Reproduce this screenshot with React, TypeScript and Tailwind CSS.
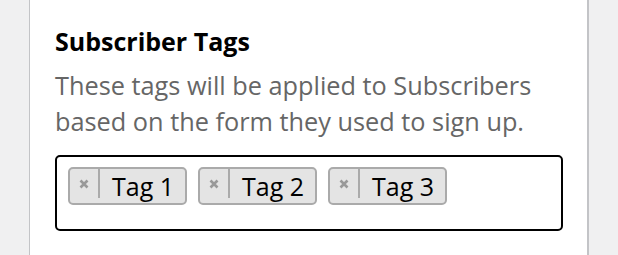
const tags = ["Tag 1", "Tag 2", "Tag 3"];

const TagChip = ({ label }: { label: string }) => (
  <li className="flex h-[38px] items-start rounded-[5px] border-2 border-[#aaaaaa] bg-[#e4e4e4]">
    <span className="flex h-[29px] w-[30px] items-center justify-center border-r-2 border-[#aaaaaa] pt-[1px]">
      <svg width="10" height="10" viewBox="0 0 10 10" className="text-[#999999]">
        <path d="M1.5 1.5 L8.5 8.5 M8.5 1.5 L1.5 8.5" stroke="currentColor" strokeWidth="2.6" />
      </svg>
    </span>
    <span className="pl-[12px] pr-[11px] text-[25px] leading-[34px] text-black">{label}</span>
  </li>
);

export default function App() {
  return (
    <div
      className="flex h-[255px] w-[618px] bg-[#f0f0f1]"
      style={{ fontFamily: '"Open Sans", "Noto Sans", sans-serif' }}
    >
      <div className="ml-[29px] w-[560px] border-l border-r-2 border-[#c3c4c7] bg-white pl-[25px] pr-[24px] pt-[26px]">
        <h3 className="text-[25px] font-bold leading-[30px] text-black">Subscriber Tags</h3>
        <p className="mt-[11px] text-[25.3px] leading-[36px] text-[#666666]">
          These tags will be applied to Subscribers based on the form they used to sign up.
        </p>

        {/* tag input */}
        <div className="mt-[16px] h-[76px] w-[508px] rounded-[5px] border-2 border-black pl-[11px] pt-[10px]">
          <ul className="flex gap-[11px]">
            {tags.map(t => (
              <TagChip key={t} label={t} />
            ))}
          </ul>
        </div>
      </div>
    </div>
  );
}
